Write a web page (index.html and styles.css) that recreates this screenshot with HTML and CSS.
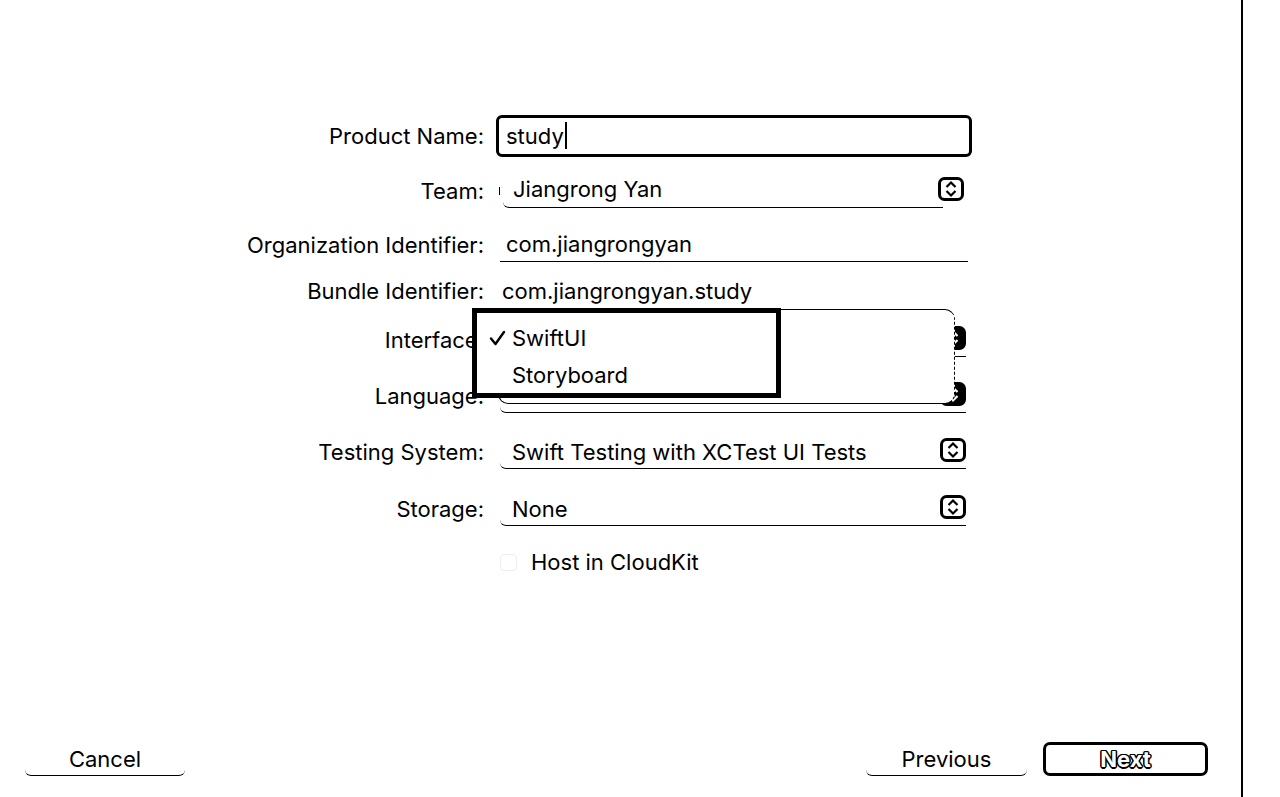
FILE: index.html
```html
<!DOCTYPE html>
<html>
<head>
    <title>Choose options for your new project</title>
    <link rel="stylesheet" href="styles.css">
</head>
<body>
    <div class="window">
        <div class="form">
            <div class="row row-name">
                <div class="label">Product Name:</div>
                <div class="value">
                    <div class="text-box">study<span class="caret"></span></div>
                </div>
            </div>

            <div class="row row-team">
                <div class="label">Team:</div>
                <div class="value">
                    <div class="popup popup-team">
                        <span class="tick"></span>
                        <span class="popup-text">Jiangrong Yan</span>
                        <svg class="stepper" width="26" height="24" viewBox="0 0 26 24"><rect x="1.5" y="1.5" width="23" height="21" rx="5" fill="#fff" stroke="#000" stroke-width="3"/><polyline points="8.5,10 13,5.5 17.5,10" fill="none" stroke="#000" stroke-width="2.2"/><polyline points="8.5,14 13,18.5 17.5,14" fill="none" stroke="#000" stroke-width="2.2"/></svg>
                    </div>
                </div>
            </div>

            <div class="row row-org">
                <div class="label">Organization Identifier:</div>
                <div class="value">
                    <div class="line-field">com.jiangrongyan</div>
                </div>
            </div>

            <div class="row row-bundle">
                <div class="label">Bundle Identifier:</div>
                <div class="value">
                    <div class="plain-value">com.jiangrongyan.study</div>
                </div>
            </div>

            <div class="row row-interface">
                <div class="label">Interface:</div>
                <div class="value">
                    <div class="popup">
                        <span class="popup-text"></span>
                        <svg class="stepper" width="26" height="24" viewBox="0 0 26 24"><rect x="1.5" y="1.5" width="23" height="21" rx="5" fill="#000" stroke="#000" stroke-width="3"/><polyline points="8.5,10 13,5.5 17.5,10" fill="none" stroke="#fff" stroke-width="2.2"/><polyline points="8.5,14 13,18.5 17.5,14" fill="none" stroke="#fff" stroke-width="2.2"/></svg>
                    </div>
                    <div class="menu-backdrop"></div>
                    <div class="menu">
                        <div class="menu-item">
                            <svg class="check" width="17" height="16" viewBox="0 0 17 16"><polyline points="2,8.5 6.5,14 15,2" fill="none" stroke="#000" stroke-width="2.4" stroke-linecap="round" stroke-linejoin="round"/></svg>
                            <span>SwiftUI</span>
                        </div>
                        <div class="menu-item">
                            <span class="check-space"></span>
                            <span>Storyboard</span>
                        </div>
                    </div>
                </div>
            </div>

            <div class="row row-language">
                <div class="label">Language:</div>
                <div class="value">
                    <div class="popup">
                        <span class="popup-text"></span>
                        <svg class="stepper" width="26" height="24" viewBox="0 0 26 24"><rect x="1.5" y="1.5" width="23" height="21" rx="5" fill="#000" stroke="#000" stroke-width="3"/><polyline points="8.5,10 13,5.5 17.5,10" fill="none" stroke="#fff" stroke-width="2.2"/><polyline points="8.5,14 13,18.5 17.5,14" fill="none" stroke="#fff" stroke-width="2.2"/></svg>
                    </div>
                </div>
            </div>

            <div class="row row-testing">
                <div class="label">Testing System:</div>
                <div class="value">
                    <div class="popup">
                        <span class="popup-text">Swift Testing with XCTest UI Tests</span>
                        <svg class="stepper" width="26" height="24" viewBox="0 0 26 24"><rect x="1.5" y="1.5" width="23" height="21" rx="5" fill="#fff" stroke="#000" stroke-width="3"/><polyline points="8.5,10 13,5.5 17.5,10" fill="none" stroke="#000" stroke-width="2.2"/><polyline points="8.5,14 13,18.5 17.5,14" fill="none" stroke="#000" stroke-width="2.2"/></svg>
                    </div>
                </div>
            </div>

            <div class="row row-storage">
                <div class="label">Storage:</div>
                <div class="value">
                    <div class="popup">
                        <span class="popup-text">None</span>
                        <svg class="stepper" width="26" height="24" viewBox="0 0 26 24"><rect x="1.5" y="1.5" width="23" height="21" rx="5" fill="#fff" stroke="#000" stroke-width="3"/><polyline points="8.5,10 13,5.5 17.5,10" fill="none" stroke="#000" stroke-width="2.2"/><polyline points="8.5,14 13,18.5 17.5,14" fill="none" stroke="#000" stroke-width="2.2"/></svg>
                    </div>
                </div>
            </div>

            <div class="row row-cloud">
                <div class="label"></div>
                <div class="value">
                    <div class="checkbox-line">
                        <span class="checkbox"></span>
                        <span>Host in CloudKit</span>
                    </div>
                </div>
            </div>
        </div>

        <!-- bottom buttons -->
        <div class="footer">
            <button class="btn btn-cancel">Cancel</button>
            <div class="footer-right">
                <button class="btn btn-previous">Previous</button>
                <button class="btn btn-next">Next</button>
            </div>
        </div>
    </div>
</body>
</html>
```

FILE: styles.css
```css
body {
    margin: 0;
    padding: 0;
    font-family: Inter, "Liberation Sans", sans-serif;
    font-size: 22px;
    color: #000;
    background-color: #fff;
}

.window {
    width: 1241px;
    height: 797px;
    border-right: 2px solid #000;
    display: flex;
    flex-direction: column;
}

.form {
    margin-top: 108px;
}

.row {
    display: flex;
    align-items: center;
    height: 56px;
}

.row-name { height: 55px; }
.row-team { height: 55px; }
.row-org { height: 54px; }
.row-bundle { height: 38px; }
.row-interface { height: 60px; }
.row-language { height: 52px; }
.row-testing { height: 60px; }
.row-storage { height: 54px; }
.row-cloud { height: 52px; }

.label {
    width: 484px;
    flex: none;
    text-align: right;
    white-space: nowrap;
}

.value {
    margin-left: 12px;
    width: 476px;
    position: relative;
}

/* Product name field, focused */
.text-box {
    height: 42px;
    box-sizing: border-box;
    border: 3px solid #000;
    border-radius: 6px;
    padding-left: 7px;
    display: flex;
    align-items: center;
}

.caret {
    display: inline-block;
    width: 2px;
    height: 27px;
    background-color: #000;
    margin-left: 1px;
}

/* Pop-up buttons */
.popup {
    position: relative;
    display: flex;
    align-items: center;
    height: 34px;
    width: 466px;
    margin-left: 4px;
    border-bottom: 1px solid #000;
    border-bottom-left-radius: 6px;
    box-sizing: border-box;
}

.popup-text {
    padding-left: 12px;
    flex: 1;
    white-space: nowrap;
}

.popup-team {
    margin-left: 7px;
    width: 461px;
    border-bottom: none;
}

.popup-team .popup-text {
    border-bottom: 1px solid #000;
    border-bottom-left-radius: 6px;
    height: 34px;
    line-height: 32px;
    margin-right: -5px;
    padding-left: 10px;
}

.tick {
    position: absolute;
    left: -4px;
    top: 13px;
    width: 1px;
    height: 8px;
    background-color: #000;
}

.stepper {
    flex: none;
    display: block;
    margin-bottom: 4px;
    position: relative;
}

.line-field {
    margin-left: 4px;
    width: 468px;
    height: 34px;
    line-height: 32px;
    padding-left: 6px;
    box-sizing: border-box;
    border-bottom: 1px solid #000;
}

.plain-value {
    margin-left: 6px;
}

/* open Interface menu */
.menu-backdrop {
    position: absolute;
    left: 2px;
    top: -14px;
    width: 457px;
    height: 95px;
    box-sizing: border-box;
    border: 1px solid #000;
    border-right-style: dashed;
    border-radius: 10px;
    background-color: #fff;
    z-index: 1;
}

.menu {
    position: absolute;
    left: -24px;
    top: -15px;
    width: 309px;
    height: 90px;
    box-sizing: border-box;
    border: 5px solid #000;
    background-color: #fff;
    padding-top: 6px;
    z-index: 2;
}

.menu-item {
    height: 37px;
    display: flex;
    align-items: center;
    padding-left: 12px;
}

.check {
    flex: none;
    display: block;
    margin-right: 6px;
}

.check-space {
    width: 23px;
    flex: none;
}

.checkbox-line {
    display: flex;
    align-items: center;
    margin-left: 4px;
}

.checkbox {
    width: 15px;
    height: 15px;
    border: 1px solid #eee;
    border-radius: 4px;
    margin-right: 14px;
}

/* bottom buttons */
.footer {
    margin-top: auto;
    display: flex;
    justify-content: space-between;
    align-items: flex-end;
    padding: 0 33px 21px 25px;
}

.footer-right {
    display: flex;
    gap: 16px;
}

.btn {
    font-family: inherit;
    font-size: 22px;
    color: #000;
    background: #fff;
    height: 34px;
    padding: 0;
    border: none;
    cursor: pointer;
}

.btn-cancel,
.btn-previous {
    border-bottom: 1.5px solid #000;
    border-radius: 0 0 6px 6px;
}

.btn-cancel {
    width: 160px;
}

.btn-previous {
    width: 161px;
}

.btn-next {
    width: 165px;
    border: 3px solid #000;
    border-radius: 7px;
    font-weight: bold;
    color: #fff;
    text-shadow: 1.5px 0 #000, -1.5px 0 #000, 0 1.5px #000, 0 -1.5px #000,
        1px 1px #000, -1px -1px #000, 1px -1px #000, -1px 1px #000;
}
```
